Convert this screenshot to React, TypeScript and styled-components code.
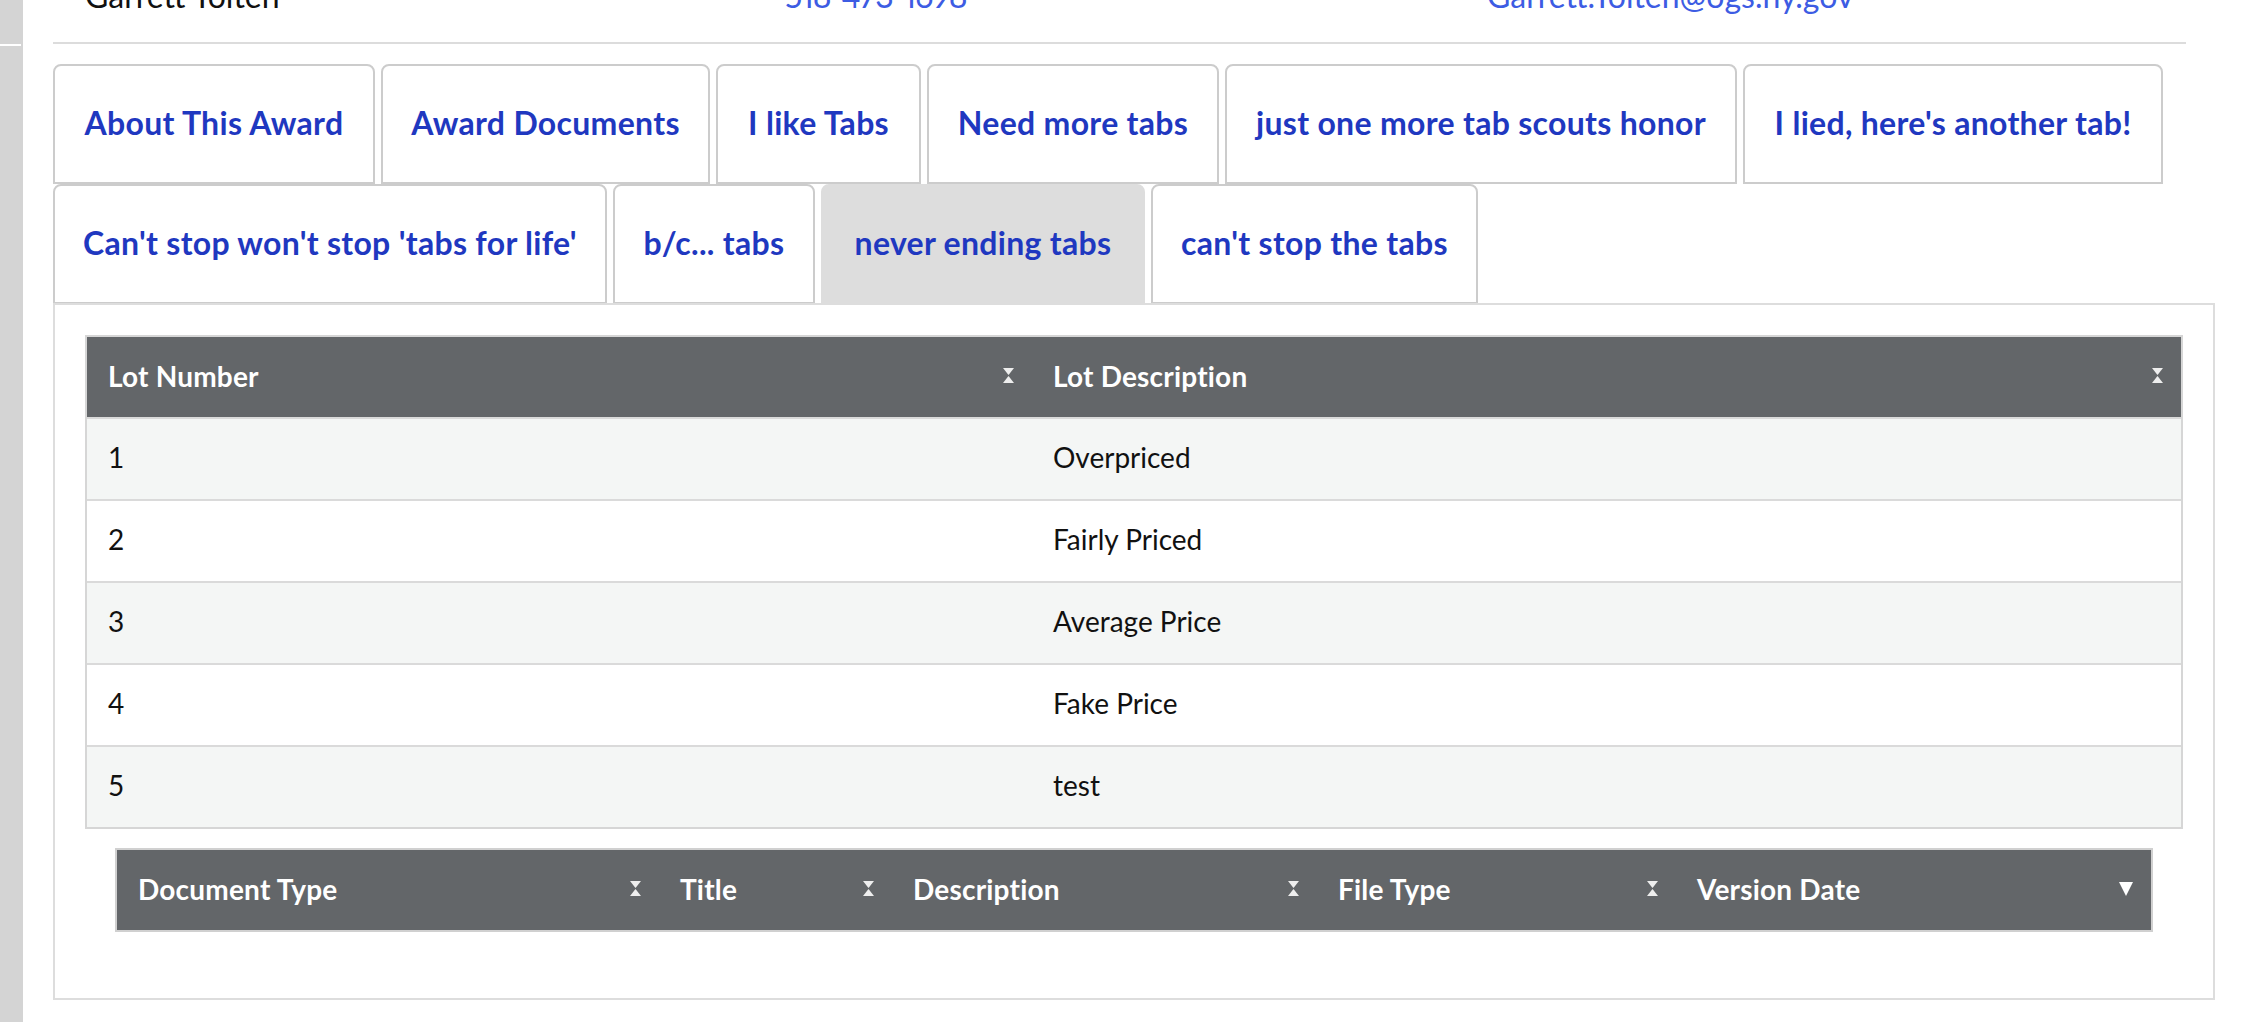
import React from "react";
import styled, { createGlobalStyle } from "styled-components";

const GlobalStyle = createGlobalStyle`
  html, body { margin: 0; padding: 0; background: #ffffff; }
  body { font-family: Lato, "Noto Sans", sans-serif; overflow: hidden; }
  *, *::before, *::after { box-sizing: border-box; }
`;

const Page = styled.div`
  display: flex;
  width: 2260px;
  height: 1022px;
  overflow: hidden;
`;

const Sidebar = styled.aside`
  flex: 0 0 23px;
  display: flex;
  flex-direction: column;
  background: #d4d4d4;
`;

const SidebarTop = styled.div`
  height: 44px;
`;

const SidebarDivider = styled.div`
  height: 2px;
  width: 21px;
  background: #ffffff;
`;

const Main = styled.main`
  flex: 0 0 2162px;
  margin-left: 30px;
  display: flex;
  flex-direction: column;
`;

const ContactRow = styled.div`
  display: grid;
  grid-template-columns: 700px 702px 1fr;
  padding-left: 32px;
  margin-top: -24px;
  height: 40px;
  line-height: 40px;
  font-size: 32px;
  white-space: nowrap;
`;

const ContactName = styled.span`
  color: #111111;
`;

const ContactLink = styled.a<{ $tight?: boolean }>`
  color: #3d5ce3;
  text-decoration: none;
  font-variant-numeric: proportional-nums;
  letter-spacing: ${(p) => (p.$tight ? "-1px" : "0")};
`;

const Rule = styled.hr`
  width: 2133px;
  height: 0;
  margin: 26px 0 20px;
  border: 0;
  border-top: 2px solid #dcdcdc;
`;

const TabList = styled.ul`
  list-style: none;
  margin: 0;
  padding: 0;
  width: 2133px;
  display: flex;
  flex-wrap: wrap;
  column-gap: 6px;
`;

const Tab = styled.li<{ $width: number; $active?: boolean }>`
  width: ${(p) => p.$width}px;
  height: 120px;
  padding-bottom: 4px;
  display: flex;
  align-items: center;
  justify-content: center;
  border: 2px solid ${(p) => (p.$active ? "#dddddd" : "#cccccc")};
  border-radius: 8px 8px 0 0;
  background: ${(p) => (p.$active ? "#dddddd" : "#ffffff")};
  color: #1f38c0;
  font-weight: 700;
  font-size: 32px;
  letter-spacing: 0.3px;
  white-space: nowrap;
  cursor: pointer;
`;

const Panel = styled.section`
  margin-top: -1px;
  border: 2px solid #dddddd;
  padding: 30px 30px 66px;
  display: flex;
  flex-direction: column;
  gap: 19px;
`;

const Indented = styled.div`
  padding: 0 30px;
`;

const DataTable = styled.div<{ $border: string }>`
  border: 2px solid ${(p) => p.$border};
`;

const HeaderRow = styled.div<{ $cols: string }>`
  display: grid;
  grid-template-columns: ${(p) => p.$cols};
  height: 80px;
  background: #636669;
  color: #ffffff;
`;

const HeaderCell = styled.div`
  display: flex;
  align-items: center;
  justify-content: space-between;
  padding: 0 18px 3px 21px;
  font-weight: 700;
  font-size: 28px;
  letter-spacing: 0.2px;
  white-space: nowrap;
`;

const BodyRow = styled.div<{ $cols: string; $striped: boolean }>`
  display: grid;
  grid-template-columns: ${(p) => p.$cols};
  height: 82px;
  border-top: 2px solid #dadada;
  background: ${(p) => (p.$striped ? "#f4f6f5" : "#ffffff")};
`;

const BodyCell = styled.div`
  display: flex;
  align-items: center;
  padding: 0 0 4px 21px;
  font-size: 28px;
  color: #111111;
`;

const SortBoth = () => (
  <svg width="11" height="15" viewBox="0 0 11 15" aria-hidden="true">
    <polygon points="0,0 11,0 5.5,7" fill="#eeeeee" />
    <polygon points="5.5,8 11,15 0,15" fill="#eeeeee" />
  </svg>
);

const SortDesc = () => (
  <svg width="14" height="14" viewBox="0 0 14 14" aria-hidden="true">
    <polygon points="0,0 14,0 7,14" fill="#ffffff" />
  </svg>
);

const tabs: { label: string; width: number; active?: boolean }[] = [
  { label: "About This Award", width: 322 },
  { label: "Award Documents", width: 329 },
  { label: "I like Tabs", width: 205 },
  { label: "Need more tabs", width: 292 },
  { label: "just one more tab scouts honor", width: 512 },
  { label: "I lied, here's another tab!", width: 420 },
  { label: "Can't stop won't stop 'tabs for life'", width: 554 },
  { label: "b/c... tabs", width: 202 },
  { label: "never ending tabs", width: 324, active: true },
  { label: "can't stop the tabs", width: 327 },
];

const lots = [
  ["1", "Overpriced"],
  ["2", "Fairly Priced"],
  ["3", "Average Price"],
  ["4", "Fake Price"],
  ["5", "test"],
];

const lotCols = "945px 1fr";
const docCols = "542px 233px 425px 359px 1fr";
const docHeaders = ["Document Type", "Title", "Description", "File Type", "Version Date"];

export default function App() {
  return (
    <>
      <GlobalStyle />
      <Page>
        <Sidebar>
          <SidebarTop />
          <SidebarDivider />
        </Sidebar>
        <Main>
          <ContactRow>
            <ContactName>Garrett Tolten</ContactName>
            <ContactLink href="#" $tight>
              518-473-1698
            </ContactLink>
            <ContactLink href="#">Garrett.Tolten@ogs.ny.gov</ContactLink>
          </ContactRow>
          <Rule />
          <TabList>
            {tabs.map((t) => (
              <Tab key={t.label} $width={t.width} $active={t.active}>
                {t.label}
              </Tab>
            ))}
          </TabList>
          <Panel>
            <DataTable $border="#d6d6d6">
              <HeaderRow $cols={lotCols}>
                <HeaderCell>
                  Lot Number
                  <SortBoth />
                </HeaderCell>
                <HeaderCell>
                  Lot Description
                  <SortBoth />
                </HeaderCell>
              </HeaderRow>
              {lots.map(([n, d], i) => (
                <BodyRow key={n} $cols={lotCols} $striped={i % 2 === 0}>
                  <BodyCell>{n}</BodyCell>
                  <BodyCell>{d}</BodyCell>
                </BodyRow>
              ))}
            </DataTable>
            <Indented>
              <DataTable $border="#d0d0d0">
                <HeaderRow $cols={docCols}>
                  {docHeaders.map((h, i) => (
                    <HeaderCell key={h}>
                      {h}
                      {i === docHeaders.length - 1 ? <SortDesc /> : <SortBoth />}
                    </HeaderCell>
                  ))}
                </HeaderRow>
              </DataTable>
            </Indented>
          </Panel>
        </Main>
      </Page>
    </>
  );
}
